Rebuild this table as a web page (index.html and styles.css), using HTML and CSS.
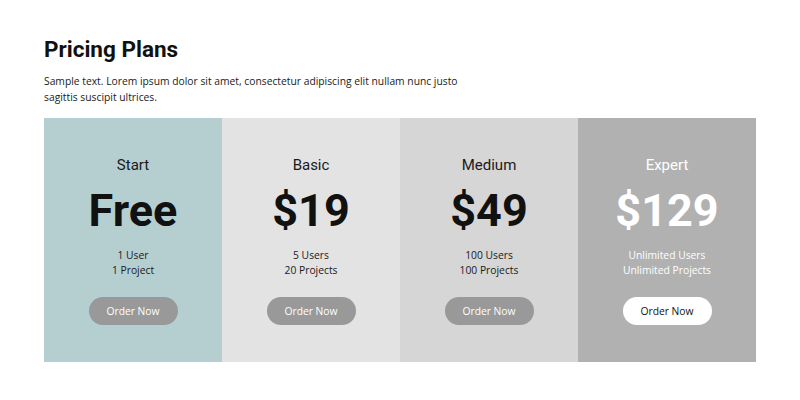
FILE: index.html
```html
<!DOCTYPE html>
<html>
<head>
<meta charset="utf-8">
<link rel="stylesheet" href="styles.css">
</head>
<body>
<section class="pricing">
  <h1 class="title">Pricing Plans</h1>
  <p class="intro">Sample text. Lorem ipsum dolor sit amet, consectetur adipiscing elit nullam nunc justo sagittis suscipit ultrices.</p>
  <div class="plans">
    <div class="plan plan-start">
      <h3 class="plan-name">Start</h3>
      <div class="price">Free</div>
      <p class="features">1 User<br>1 Project</p>
      <a class="btn">Order Now</a>
    </div>
    <div class="plan plan-basic">
      <h3 class="plan-name">Basic</h3>
      <div class="price">$19</div>
      <p class="features">5 Users<br>20 Projects</p>
      <a class="btn">Order Now</a>
    </div>
    <div class="plan plan-medium">
      <h3 class="plan-name">Medium</h3>
      <div class="price">$49</div>
      <p class="features">100 Users<br>100 Projects</p>
      <a class="btn">Order Now</a>
    </div>
    <div class="plan plan-expert">
      <h3 class="plan-name">Expert</h3>
      <div class="price">$129</div>
      <p class="features">Unlimited Users<br>Unlimited Projects</p>
      <a class="btn btn-light">Order Now</a>
    </div>
  </div>
</section>
</body>
</html>
```

FILE: styles.css
```css
* { box-sizing: border-box; }
body {
  margin: 0;
  background: #ffffff;
  font-family: "Open Sans", sans-serif;
  color: #1a1a1a;
}
.pricing {
  padding: 36px 44px 0 44px;
}
.title {
  margin: 0;
  font-family: Roboto, sans-serif;
  font-weight: 700;
  font-size: 22.5px;
  line-height: 26px;
  color: #111111;
}
.intro {
  margin: 11px 0 0 0;
  width: 420px;
  font-size: 10.3px;
  line-height: 16px;
  color: #1a1a1a;
}
.plans {
  margin-top: 13px;
  display: grid;
  grid-template-columns: repeat(4, 178px);
  height: 244px;
}
.plan {
  display: flex;
  flex-direction: column;
  align-items: center;
  padding-top: 37px;
}
.plan-start { background: #b5cfd0; }
.plan-basic { background: #e3e3e3; }
.plan-medium { background: #d6d6d6; }
.plan-expert { background: #b1b1b1; color: #ffffff; }
.plan-name {
  margin: 0;
  font-family: Roboto, sans-serif;
  font-weight: 400;
  font-size: 15px;
  line-height: 20px;
}
.price {
  margin-top: 8px;
  font-family: Roboto, sans-serif;
  font-weight: 700;
  font-size: 45px;
  line-height: 56px;
  color: #111111;
}
.plan-expert .price { color: #ffffff; }
.features {
  margin: 9px 0 0 0;
  font-size: 10.3px;
  line-height: 15px;
  text-align: center;
}
.btn {
  margin-top: 19px;
  width: 89px;
  height: 28px;
  border-radius: 14px;
  background: #999999;
  color: #ffffff;
  font-size: 10.3px;
  line-height: 28px;
  text-align: center;
}
.btn-light {
  background: #ffffff;
  color: #111111;
}
```
